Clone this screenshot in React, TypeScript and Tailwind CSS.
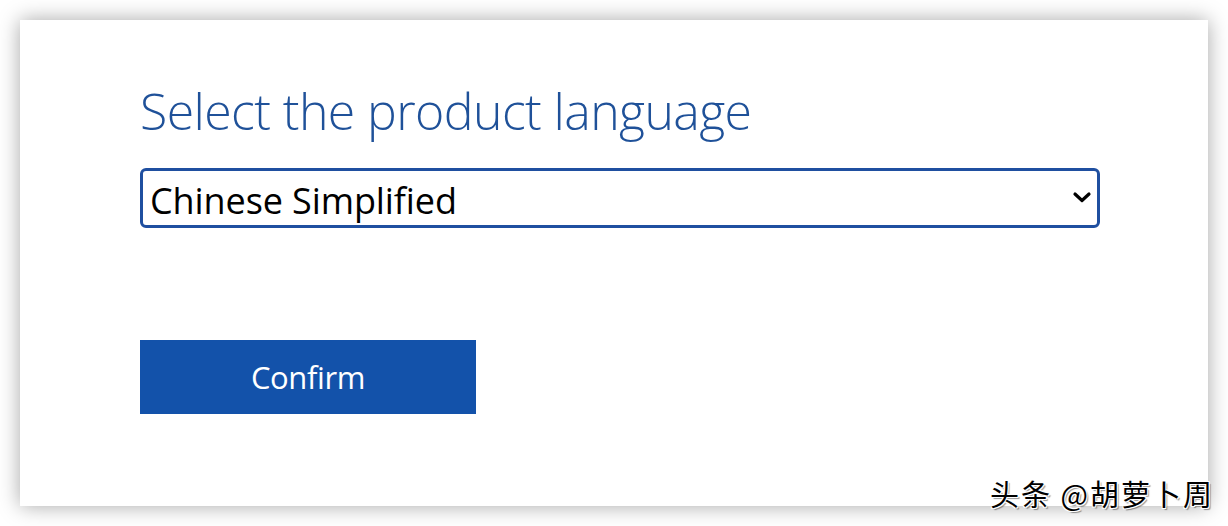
import { useState } from "react";

const languages = [
  "Arabic",
  "Chinese Simplified",
  "Chinese Traditional",
  "English",
  "French",
  "German",
  "Japanese",
];

const App = () => {
  const [language, setLanguage] = useState("Chinese Simplified");

  return (
    <div className="relative w-[1228px] h-[526px] bg-white p-[20px] overflow-hidden">
      <div
        className="w-full h-full bg-white shadow-[0_0_20px_rgba(0,0,0,0.35)] pl-[120px] pt-[74px] flex flex-col"
        style={{ fontFamily: '"Open Sans", "Noto Sans", sans-serif' }}
      >
        <h1 className="text-[50px] leading-[34px] font-light text-[#1f5199] tracking-[-0.6px]">
          Select the product language
        </h1>

        <div className="relative mt-[40px] w-[960px] h-[60px]">
          <select
            value={language}
            onChange={(e) => setLanguage(e.target.value)}
            className="appearance-none w-full h-full border-[3px] border-[#1f4fa0] rounded-[6px] bg-white pl-[7px] pr-[40px] pt-[3px] text-[36px] text-black outline-none tracking-[-0.1px]"
            style={{ fontFamily: '"Open Sans", "Noto Sans", sans-serif' }}
          >
            {languages.map((lang) => (
              <option key={lang} value={lang}>
                {lang}
              </option>
            ))}
          </select>
          <svg
            className="absolute right-[8px] top-[22px] pointer-events-none"
            width="20"
            height="14"
            viewBox="0 0 20 14"
          >
            <path
              d="M3 4 L10 10.5 L17 4"
              fill="none"
              stroke="#000"
              strokeWidth="3.2"
              strokeLinecap="round"
              strokeLinejoin="round"
            />
          </svg>
        </div>

        <button className="mt-[112px] w-[336px] h-[74px] bg-[#1352aa] text-white text-[31px] tracking-[-0.4px]">
          Confirm
        </button>
      </div>

      <span
        className="absolute left-[990px] top-[479px] text-[29px] tracking-[2px] text-black leading-none"
        style={{
          fontFamily: '"Noto Sans CJK SC", sans-serif',
          textShadow:
            "1px 1px 0 #fff, -1px -1px 0 #fff, 1px -1px 0 #fff, -1px 1px 0 #fff, 2px 2px 1px rgba(0,0,0,0.4)",
        }}
      >
        头条 @胡萝卜周
      </span>
    </div>
  );
};

export default App;
